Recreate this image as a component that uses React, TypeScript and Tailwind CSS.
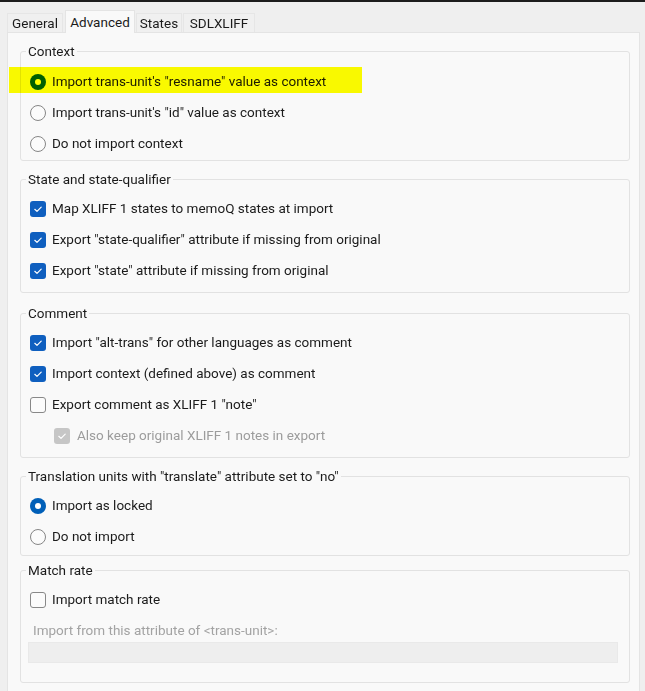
import React from "react";

function Radio({ checked }: { checked?: boolean }) {
  if (checked) {
    return (
      <span className="w-4 h-4 shrink-0 rounded-full bg-[#005fb8] flex items-center justify-center">
        <span className="w-[6px] h-[6px] rounded-full bg-white" />
      </span>
    );
  }
  return <span className="w-4 h-4 shrink-0 rounded-full border border-[#868686] bg-[#fbfbfb]" />;
}

function Check({ checked, disabled }: { checked?: boolean; disabled?: boolean }) {
  if (!checked) {
    return <span className="w-4 h-4 shrink-0 rounded-[3px] border border-[#888888] bg-[#fbfbfb]" />;
  }
  return (
    <span
      className={
        "w-4 h-4 shrink-0 rounded-[3px] flex items-center justify-center " +
        (disabled ? "bg-[#c6c6c6]" : "bg-[#0f5fbf]")
      }
    >
      <svg width="16" height="16" viewBox="0 0 16 16" fill="none">
        <path d="M4.8 8.3 L7 10.4 L11.2 6.2" stroke="white" strokeWidth="1.2" strokeLinecap="round" strokeLinejoin="round" />
      </svg>
    </span>
  );
}

function Row({
  control,
  label,
  indent,
  disabled,
}: {
  control: React.ReactNode;
  label: string;
  indent?: boolean;
  disabled?: boolean;
}) {
  return (
    <div className={"flex items-center h-[31px] " + (indent ? "pl-[33px] gap-[7px]" : "pl-[9px] gap-[6px]")}>
      {control}
      <span className={disabled ? "text-[#9c9c9c]" : "text-[#1b1b1b]"}>{label}</span>
    </div>
  );
}

function Group({
  title,
  className,
  children,
}: {
  title: string;
  className: string;
  children: React.ReactNode;
}) {
  return (
    <fieldset className={"border border-[#e2e2e2] rounded-[3px] " + className}>
      <legend className="ml-[5px] px-[2px] leading-4 text-[#1b1b1b]">{title}</legend>
      {children}
    </fieldset>
  );
}

export default function App() {
  return (
    <div className="relative w-[645px] h-[691px] overflow-hidden bg-[#efefef] border-t-2 border-[#1c1c1c] font-['Roboto','Liberation_Sans',sans-serif] text-[13.5px] text-[#1b1b1b]">
      <div className="flex items-end pl-[7px] pt-[8px]">
        <div className="w-[56px] h-[19px] flex items-center justify-center bg-[#f0f0f0] border border-b-0 border-[#e6e6e6]">
          General
        </div>
        <div className="relative z-10 -mb-px ml-[2px] w-[70px] h-[23px] flex items-start pt-[1px] justify-center bg-[#f9f9f9] border border-b-0 border-[#e4e4e4]">
          Advanced
        </div>
        <div className="ml-[1px] w-[46px] h-[19px] flex items-center justify-center bg-[#f0f0f0] border border-b-0 border-[#e6e6e6]">
          States
        </div>
        <div className="ml-[1px] w-[72px] h-[19px] flex items-center justify-center bg-[#f0f0f0] border border-b-0 border-[#e6e6e6]">
          SDLXLIFF
        </div>
      </div>

      <div className="ml-[7px] w-[633px] h-[700px] bg-[#f9f9f9] border border-[#e4e4e4] pl-[12px] pr-[9px] pt-[10px]">
        <Group title="Context" className="pt-[7px] pb-[1px]">
          <Row control={<Radio checked />} label={'Import trans-unit\'s "resname" value as context'} />
          <Row control={<Radio />} label={'Import trans-unit\'s "id" value as context'} />
          <Row control={<Radio />} label="Do not import context" />
        </Group>

        <Group title="State and state-qualifier" className="mt-[10px] pt-[6px] pb-[6px]">
          <Row control={<Check checked />} label="Map XLIFF 1 states to memoQ states at import" />
          <Row control={<Check checked />} label={'Export "state-qualifier" attribute if missing from original'} />
          <Row control={<Check checked />} label={'Export "state" attribute if missing from original'} />
        </Group>

        <Group title="Comment" className="mt-[12px] pt-[6px] pb-[6px]">
          <Row control={<Check checked />} label={'Import "alt-trans" for other languages as comment'} />
          <Row control={<Check checked />} label="Import context (defined above) as comment" />
          <Row control={<Check />} label={'Export comment as XLIFF 1 "note"'} />
          <Row control={<Check checked disabled />} label="Also keep original XLIFF 1 notes in export" indent disabled />
        </Group>

        <Group title={'Translation units with "translate" attribute set to "no"'} className="mt-[10px] pt-[6px] pb-[3px]">
          <Row control={<Radio checked />} label="Import as locked" />
          <Row control={<Radio />} label="Do not import" />
        </Group>

        <Group title="Match rate" className="mt-[6px] pt-[6px] pb-[19px]">
          <Row control={<Check />} label="Import match rate" />
          <div className="mt-[7px] pl-[12px] leading-4 text-[#a3a3a3]">Import from this attribute of &lt;trans-unit&gt;:</div>
          <div className="mt-[4px] ml-[7px] mr-[11px] h-[21px] bg-[#eeeeee] border border-[#e9e9e9]" />
        </Group>
      </div>

      <div className="absolute left-[9px] top-[65px] w-[353px] h-[26px] bg-[#ffff00] mix-blend-multiply" />
    </div>
  );
}
